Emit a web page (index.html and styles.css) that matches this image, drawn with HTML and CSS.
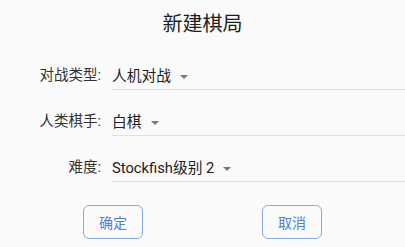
FILE: index.html
```html
<!DOCTYPE html>
<html lang="zh">
<head>
<meta charset="utf-8">
<title>新建棋局</title>
<link rel="stylesheet" href="styles.css">
</head>
<body>
<div class="dialog">
  <h1 class="title">新建棋局</h1>
  <div class="form">
    <div class="row">
      <span class="label">对战类型:</span>
      <div class="field"><span class="value">人机对战</span><span class="arrow"></span></div>
    </div>
    <div class="row">
      <span class="label">人类棋手:</span>
      <div class="field"><span class="value">白棋</span><span class="arrow"></span></div>
    </div>
    <div class="row">
      <span class="label">难度:</span>
      <div class="field"><span class="value">Stockfish级别 2</span><span class="arrow"></span></div>
    </div>
  </div>
  <div class="actions">
    <button class="btn">确定</button>
    <button class="btn">取消</button>
  </div>
</div>
</body>
</html>
```
FILE: styles.css
```css
html, body {
  margin: 0;
  padding: 0;
  background: #fafafa;
}
body {
  font-family: Roboto, "Noto Sans CJK SC", sans-serif;
  color: #212121;
}
.dialog {
  width: 405px;
  height: 247px;
  box-sizing: border-box;
  padding-top: 10px;
}
.title {
  margin: 0;
  font-size: 20px;
  font-weight: 400;
  line-height: 28px;
  text-align: center;
  color: #1e1e1e;
}
.form {
  margin-top: 26px;
  display: flex;
  flex-direction: column;
  gap: 20px;
}
.row {
  display: flex;
  align-items: flex-start;
  gap: 11px;
}
.label {
  width: 101px;
  flex: none;
  text-align: right;
  font-size: 14.5px;
  line-height: 24px;
  color: #333;
}
.field {
  flex: 1;
  display: flex;
  align-items: center;
  height: 24px;
  padding-bottom: 1px;
  border-bottom: 1px solid #e0e0e0;
}
.value {
  font-size: 14.75px;
  line-height: 24px;
  color: #212121;
}
.arrow {
  width: 0;
  height: 0;
  margin-left: 9px;
  margin-top: 1px;
  border-left: 4px solid transparent;
  border-right: 4px solid transparent;
  border-top: 4px solid #777;
}
.actions {
  margin-top: 23px;
  display: flex;
  justify-content: center;
  gap: 119px;
}
.btn {
  width: 60px;
  height: 34px;
  box-sizing: border-box;
  background: transparent;
  border: 1px solid #86a9e6;
  border-radius: 6px;
  color: #4a80d6;
  font-family: Roboto, "Noto Sans CJK SC", sans-serif;
  font-size: 14px;
  padding: 0;
}
```
